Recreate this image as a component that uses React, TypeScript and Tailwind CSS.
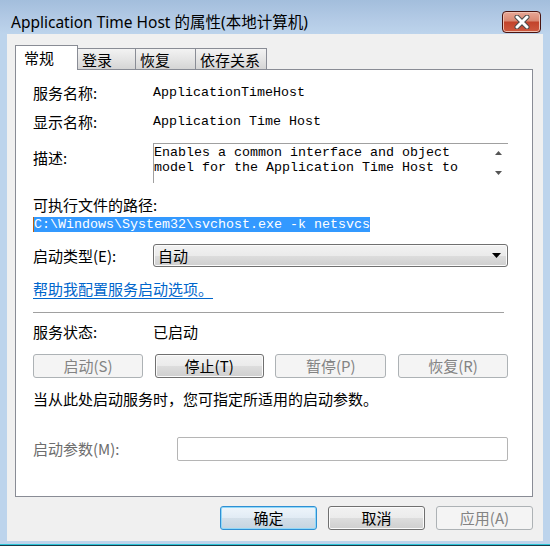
import React from 'react';

const cjk = "font-['Noto_Sans_CJK_SC',sans-serif]";
const mono = "font-['Liberation_Mono','Noto_Sans_CJK_SC',monospace]";

type Variant = 'normal' | 'disabled' | 'default';

// Win7 style push button
const WinButton: React.FC<{ label: string; variant?: Variant; className?: string }> = ({
  label,
  variant = 'normal',
  className = '',
}) => {
  const styles: Record<Variant, string> = {
    normal:
      'border-[#707070] text-black bg-[linear-gradient(180deg,#f2f2f2_0%,#ebebeb_50%,#dddddd_51%,#cfcfcf_100%)] shadow-[inset_0_0_0_1px_#fbfbfb]',
    disabled: 'border-[#adb2b5] text-[#838383] bg-[#f4f4f4]',
    default:
      'border-[#2f8fd3] text-black bg-[linear-gradient(180deg,#eef5fb_0%,#e1ebf4_50%,#d3dfe9_51%,#c6d4e0_100%)] shadow-[inset_0_0_0_1px_#90d8f8]',
  };
  return (
    <div
      className={`h-[24px] rounded-[3px] border flex items-center justify-center text-[15px] leading-[20px] ${styles[variant]} ${className}`}
    >
      {label}
    </div>
  );
};

const Row: React.FC<{ label: string; className?: string; children?: React.ReactNode }> = ({
  label,
  className = '',
  children,
}) => (
  <div className={`flex items-center ${className}`}>
    <div className="w-[120px] shrink-0">{label}</div>
    {children}
  </div>
);

const tabs = [
  { name: '登录', w: 'w-[58px]' },
  { name: '恢复', w: 'w-[60px]' },
  { name: '依存关系', w: 'w-[71px]' },
];

export default function App() {
  return (
    <div className={`w-[550px] h-[546px] flex flex-col bg-[#bdd4ec] overflow-hidden ${cjk}`}>
      {/* Title bar */}
      <div className="h-[34px] shrink-0 flex bg-[linear-gradient(180deg,#a3bedc_0%,#b4cbe6_60%,#bdd4ec_100%)]">
        <div className="pl-[11px] pt-[11px] text-[15.5px] leading-[22px] text-black font-['Noto_Sans','Noto_Sans_CJK_SC',sans-serif]">
          Application Time Host 的属性(本地计算机)
        </div>
        <div className="ml-auto mr-[9px] mt-[11px] w-[39px] h-[22px] rounded-[4px] border border-[#4a1410] flex items-center justify-center bg-[linear-gradient(180deg,#e8a796_0%,#d98872_45%,#c2432b_50%,#cf5a40_100%)] shadow-[inset_0_0_0_1px_#eec0b2]">
          <svg width="16" height="14" viewBox="0 0 16 14">
            <path d="M3 2 L13 12 M13 2 L3 12" stroke="#4b4b4b" strokeWidth="5" strokeLinecap="round" />
            <path d="M3 2 L13 12 M13 2 L3 12" stroke="#ffffff" strokeWidth="3" strokeLinecap="round" />
          </svg>
        </div>
      </div>

      {/* Client area */}
      <div className="mx-[7px] h-[507px] shrink-0 bg-[#f0f0f0] flex flex-col">
        {/* Tabs */}
        <div className="mt-[11px] ml-[8px] h-[24px] flex items-end text-[15px] leading-[20px]">
          <div className="relative z-10 w-[63px] h-[25px] -mb-px border border-b-0 border-[#898c95] bg-white pl-[8px] pt-[2px]">
            常规
          </div>
          {tabs.map((t) => (
            <div
              key={t.name}
              className={`${t.w} h-[21px] border border-b-0 border-l-0 border-[#898c95] pl-[4px] pt-[1px] bg-[linear-gradient(180deg,#f3f3f3_0%,#e3e3e3_55%,#d5d5d5_100%)]`}
            >
              {t.name}
            </div>
          ))}
        </div>

        {/* Panel */}
        <div className="ml-[8px] mr-[10px] h-[428px] border border-[#898c95] bg-white pl-[17px] pr-[24px] flex flex-col text-[15px] leading-[20px] text-black">
          <Row label="服务名称:" className="mt-[13px] h-[20px]">
            <span className={`${mono} text-[13.33px]`}>ApplicationTimeHost</span>
          </Row>
          <Row label="显示名称:" className="mt-[9px] h-[20px]">
            <span className={`${mono} text-[13.33px]`}>Application Time Host</span>
          </Row>

          <div className="mt-[11px] flex h-[40px]">
            <div className="w-[120px] shrink-0 pt-[5px]">描述:</div>
            <div className="flex-1 flex border-t border-l border-[#a0a0a0]">
              <div className={`flex-1 pt-[1px] ${mono} text-[13.33px] leading-[15px]`}>
                <div>Enables a common interface and object</div>
                <div>model for the Application Time Host to</div>
              </div>
              <div className="w-[20px] flex flex-col items-center justify-between pt-[7px] pb-[8px]">
                <svg width="7" height="4" viewBox="0 0 7 4">
                  <path d="M3.5 0 L7 4 L0 4 Z" fill="#555" />
                </svg>
                <svg width="7" height="4" viewBox="0 0 7 4">
                  <path d="M0 0 L7 0 L3.5 4 Z" fill="#555" />
                </svg>
              </div>
            </div>
          </div>

          <div className="mt-[12px] h-[20px]">可执行文件的路径:</div>
          <div className="mt-[2px] h-[15px] flex">
            <span className={`bg-[#3399ff] text-white ${mono} text-[13.33px] leading-[15px] border-l border-[#c06010]`}>
              C:\Windows\System32\svchost.exe -k netsvcs
            </span>
          </div>

          <Row label="启动类型(E):" className="mt-[12px] h-[23px]">
            <div className="flex-1 h-[23px] rounded-[3px] border border-[#707070] flex items-center pl-[4px] pr-[6px] bg-[linear-gradient(180deg,#f2f2f2_0%,#ebebeb_50%,#dddddd_51%,#cfcfcf_100%)] shadow-[inset_0_0_0_1px_#fbfbfb]">
              <span>自动</span>
              <svg className="ml-auto" width="9" height="5" viewBox="0 0 9 5">
                <path d="M0 0 L9 0 L4.5 5 Z" fill="#000" />
              </svg>
            </div>
          </Row>

          <div className="mt-[12px] h-[20px]">
            <span className="text-[#0066cc] underline underline-offset-[3px]">帮助我配置服务启动选项。</span>
          </div>

          <div className="mt-[13px] h-px bg-[#a0a0a0] mr-[4px]" />

          <Row label="服务状态:" className="mt-[9px] h-[20px]">
            <span>已启动</span>
          </Row>

          <div className="mt-[12px] w-[475px] flex justify-between">
            <WinButton label="启动(S)" variant="disabled" className="w-[110px]" />
            <WinButton label="停止(T)" className="w-[109px]" />
            <WinButton label="暂停(P)" variant="disabled" className="w-[111px]" />
            <WinButton label="恢复(R)" variant="disabled" className="w-[110px]" />
          </div>

          <div className="mt-[11px] h-[20px]">当从此处启动服务时，您可指定所适用的启动参数。</div>

          <div className="mt-[28px] flex items-center h-[24px]">
            <div className="w-[144px] shrink-0 text-[#6d6d6d]">启动参数(M):</div>
            <div className="flex-1 h-[24px] rounded-[2px] border border-[#b5b5b5] bg-white" />
          </div>
        </div>

        {/* Dialog buttons */}
        <div className="mt-[9px] mr-[10px] flex justify-end gap-[11px]">
          <WinButton label="确定" variant="default" className="w-[97px]" />
          <WinButton label="取消" className="w-[97px]" />
          <WinButton label="应用(A)" variant="disabled" className="w-[97px]" />
        </div>
      </div>

      <div className="mt-auto h-px bg-[#2bc5d8]" />
      <div className="h-px bg-[#1b3b4a]" />
    </div>
  );
}
